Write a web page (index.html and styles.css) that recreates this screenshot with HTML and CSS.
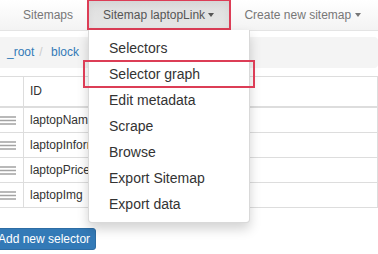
FILE: index.html
```html
<!DOCTYPE html>
<html lang="en">
<head>
    <meta charset="UTF-8">
    <title>Web Scraper - Sitemap laptopLink</title>
    <link rel="stylesheet" href="styles.css">
</head>
<body>
    <nav class="navbar">
        <ul class="nav">
            <li><a href="#">Sitemaps</a></li>
            <li class="dropdown open">
                <a href="#" class="active marked">Sitemap laptopLink <span class="caret"></span></a>
                <ul class="dropdown-menu">
                    <li><a href="#">Selectors</a></li>
                    <li><a href="#" class="marked">Selector graph</a></li>
                    <li><a href="#">Edit metadata</a></li>
                    <li><a href="#">Scrape</a></li>
                    <li><a href="#">Browse</a></li>
                    <li><a href="#">Export Sitemap</a></li>
                    <li><a href="#">Export data</a></li>
                </ul>
            </li>
            <li><a href="#">Create new sitemap <span class="caret"></span></a></li>
        </ul>
    </nav>

    <div class="content">
        <ol class="breadcrumb">
            <li><a href="#">_root</a></li>
            <li><a href="#">block</a></li>
        </ol>

        <table class="selectors">
            <thead>
                <tr>
                    <th class="handle-col"></th>
                    <th>ID</th>
                </tr>
            </thead>
            <tbody>
                <tr>
                    <td class="handle-col"><svg class="handle" width="16" height="9" viewBox="0 0 16 9"><path d="M0 1h16M0 4.5h16M0 8h16" stroke="#a3a3a3" stroke-width="1.4"/></svg></td>
                    <td>laptopName</td>
                </tr>
                <tr>
                    <td class="handle-col"><svg class="handle" width="16" height="9" viewBox="0 0 16 9"><path d="M0 1h16M0 4.5h16M0 8h16" stroke="#a3a3a3" stroke-width="1.4"/></svg></td>
                    <td>laptopInformation</td>
                </tr>
                <tr>
                    <td class="handle-col"><svg class="handle" width="16" height="9" viewBox="0 0 16 9"><path d="M0 1h16M0 4.5h16M0 8h16" stroke="#a3a3a3" stroke-width="1.4"/></svg></td>
                    <td>laptopPrice</td>
                </tr>
                <tr>
                    <td class="handle-col"><svg class="handle" width="16" height="9" viewBox="0 0 16 9"><path d="M0 1h16M0 4.5h16M0 8h16" stroke="#a3a3a3" stroke-width="1.4"/></svg></td>
                    <td>laptopImg</td>
                </tr>
            </tbody>
        </table>

        <button type="button" class="btn-add">Add new selector</button>
    </div>
</body>
</html>
```

FILE: styles.css
```css
body {
    margin: 0;
    font-family: "Liberation Sans", Arial, sans-serif;
    font-size: 12px;
    color: #333;
    background: white;
    overflow: hidden;
}
a {
    text-decoration: none;
}
.navbar {
    height: 30px;
    background: linear-gradient(to bottom, #ffffff 0, #f3f3f3 100%);
    border-bottom: 1px solid #e4e4e4;
    position: relative;
    z-index: 2;
}
.nav {
    display: flex;
    list-style: none;
    margin: 0 0 0 8px;
    padding: 0;
}
.nav > li {
    position: relative;
}
.nav > li > a {
    display: block;
    padding: 0 15px;
    line-height: 30px;
    color: #777;
}
.nav > li > a.active {
    color: #555;
    background: linear-gradient(to bottom, #dedede 0, #e6e6e6 100%);
    box-shadow: inset 0 3px 9px rgba(0,0,0,0.06);
}
.caret {
    display: inline-block;
    width: 0;
    height: 0;
    vertical-align: middle;
    border-top: 4px solid;
    border-left: 3.5px solid transparent;
    border-right: 3.5px solid transparent;
    margin-top: -2px;
}
/* red annotation frames */
.marked {
    position: relative;
}
.marked::after {
    content: "";
    position: absolute;
    border: 2px solid #dc3d56;
    pointer-events: none;
}
.nav > li > a.marked::after {
    left: -1px;
    right: -2px;
    top: -1px;
    bottom: 0;
}
.dropdown-menu {
    position: absolute;
    top: 100%;
    left: 0;
    min-width: 160px;
    margin: 0;
    padding: 5px 0;
    list-style: none;
    background: white;
    border: 1px solid rgba(0,0,0,0.15);
    border-top: none;
    border-radius: 0 0 4px 4px;
    box-shadow: 0 6px 12px rgba(0,0,0,0.175);
    font-size: 14px;
}
.dropdown-menu a {
    display: block;
    padding: 3px 20px;
    line-height: 20px;
    color: #333;
    white-space: nowrap;
}
.dropdown-menu a.marked::after {
    left: -6px;
    right: -6px;
    top: -1px;
    bottom: -1px;
}
.content {
    margin-left: -8px;
}
.breadcrumb {
    display: flex;
    list-style: none;
    margin: 6px 0 8px;
    padding: 7px 15px;
    line-height: 17px;
    background: #f4f4f4;
    border-radius: 4px;
}
.breadcrumb a {
    color: #337ab7;
}
.breadcrumb li + li::before {
    content: "/\00a0";
    padding: 0 5px;
    color: #ccc;
}
.selectors {
    width: 100%;
    border-collapse: collapse;
    border: 1px solid #ddd;
    border-right: none;
}
.selectors th {
    text-align: left;
    font-weight: normal;
    padding: 6px 6px;
    line-height: 17px;
    border: 1px solid #ddd;
    border-top: none;
    border-bottom: 2px solid #ddd;
}
.selectors td {
    padding: 4px 6px;
    line-height: 16px;
    border: 1px solid #ddd;
    white-space: nowrap;
}
.selectors .handle-col {
    width: 16px;
    padding-left: 7px;
    padding-right: 7px;
}
.handle {
    display: block;
}
.btn-add {
    margin-top: 20px;
    padding: 1px 5px;
    font-family: inherit;
    font-size: 12px;
    line-height: 18px;
    color: white;
    background: #337ab7;
    border: 1px solid #2e6da4;
    border-radius: 3px;
    cursor: pointer;
}
```
